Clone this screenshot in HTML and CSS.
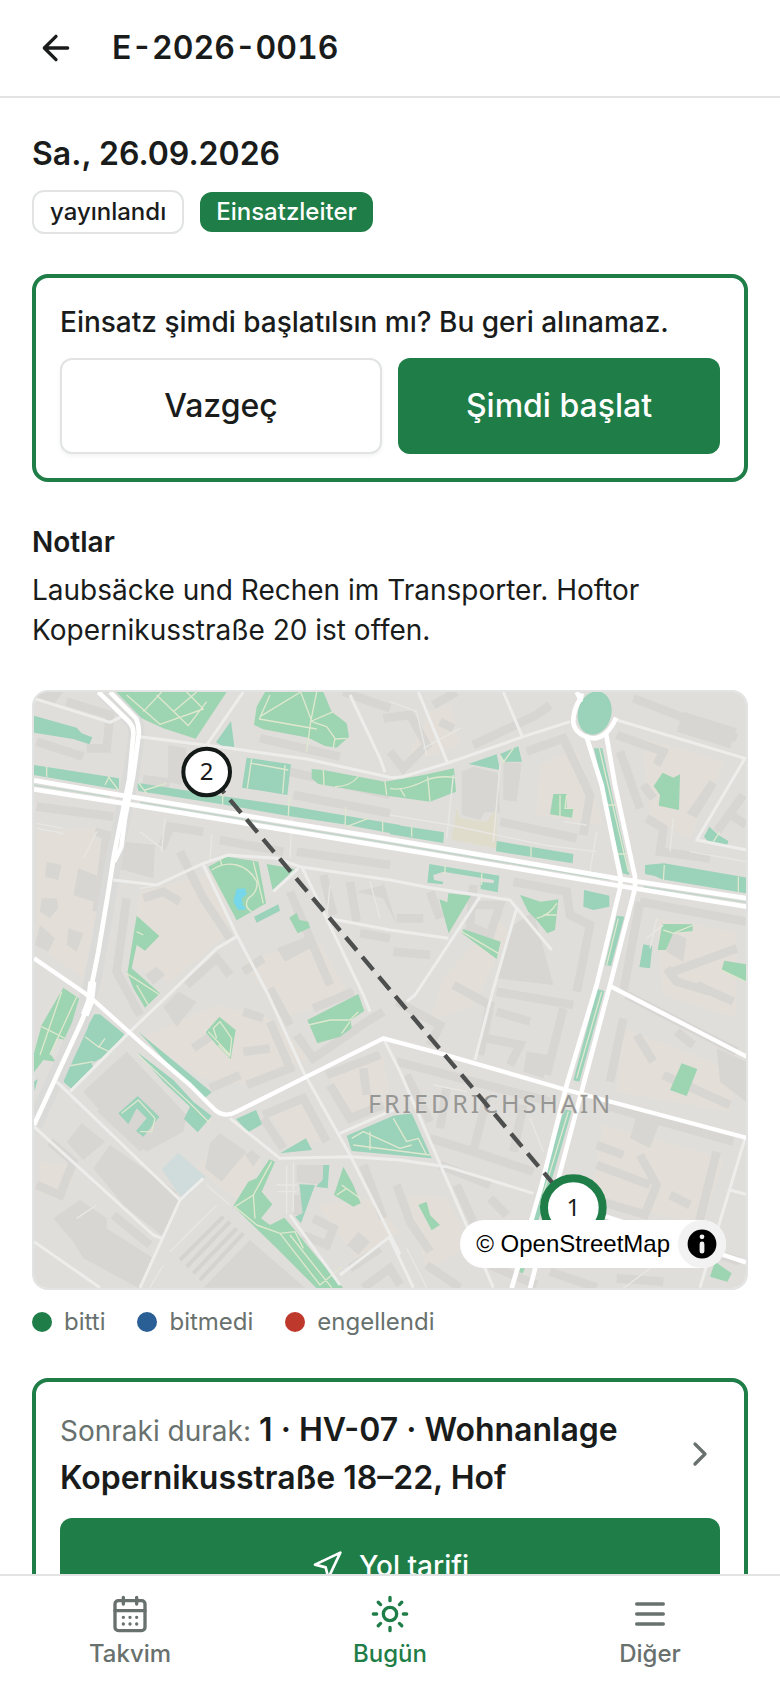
FILE: index.html
```html
<!DOCTYPE html>
<html lang="tr">
<head>
<meta charset="utf-8">
<meta name="viewport" content="width=device-width, initial-scale=1">
<title>E-2026-0016</title>
<link rel="stylesheet" href="styles.css">
</head>
<body>
<div class="app">
  <header class="topbar">
    <a class="back" href="#" aria-label="Geri">
      <svg class="icon" viewBox="0 0 24 24"><path d="m12 19-7-7 7-7M19 12H5"/></svg>
    </a>
    <h1 class="topbar-title">E-2026-0016</h1>
  </header>

  <main class="content">
    <section class="summary">
      <h2 class="date">Sa., 26.09.2026</h2>
      <div class="badges">
        <span class="badge badge-outline">yayınlandı</span>
        <span class="badge badge-solid">Einsatzleiter</span>
      </div>
    </section>

    <section class="card">
      <p class="question">Einsatz şimdi başlatılsın mı? Bu geri alınamaz.</p>
      <div class="actions">
        <button class="btn btn-outline" type="button">Vazgeç</button>
        <button class="btn btn-primary" type="button">Şimdi başlat</button>
      </div>
    </section>

    <section class="notes">
      <h3 class="notes-title">Notlar</h3>
      <p class="notes-text">Laubsäcke und Rechen im Transporter. Hoftor Kopernikusstraße 20 ist offen.</p>
    </section>

    <section class="map-block">
      <div class="map">
        <svg class="map-canvas" viewBox="12 21 2136 1788" preserveAspectRatio="xMidYMid slice" role="img" aria-label="Friedrichshain">
          <rect class="land" x="0" y="0" width="2160" height="1830"/>

          <!-- courtyards -->
          <g class="yard">
            <path d="M20 440 200 430 220 560 160 880 20 780Z"/>
            <path d="M330 620 560 560 600 740 420 890 300 840Z"/>
            <path d="M640 830 860 760 960 930 760 1000Z"/>
            <path d="M330 1060 560 960 720 1000 840 1120 660 1200 520 1180Z"/>
            <path d="M900 1180 1060 1110 1080 1270 960 1290Z"/>
            <path d="M710 1270 830 1230 900 1360 780 1390Z"/>
            <path d="M1240 880 1400 700 1440 740 1330 960 1200 1010Z"/>
            <path d="M1530 240 1640 190 1720 420 1520 390Z"/>
            <path d="M1840 160 2080 230 1980 460 1860 400Z"/>
            <path d="M1880 700 2120 740 2120 1000 1900 930Z"/>
            <path d="M1780 1030 2120 1160 2100 1280 1760 1220Z"/>
            <path d="M1720 1320 2080 1420 2020 1620 1680 1540Z"/>
            <path d="M860 1560 1020 1540 1110 1640 980 1720Z"/>
            <path d="M1130 1530 1250 1540 1320 1680 1190 1760Z"/>
            <path d="M30 1430 110 1440 130 1500 30 1530Z"/>
            <path d="M560 1380 700 1430 620 1540 500 1450Z"/>
            <path d="M1200 80 1260 60 1290 180 1120 240Z"/>
          </g>

          <!-- solid buildings -->
          <g class="building">
            <path d="M160 1220 290 1100 470 1290 460 1340 350 1400 230 1300Z"/>
            <path d="M70 1600 150 1545 230 1600 230 1630 370 1720 325 1808 160 1720 130 1670Z"/>
            <path d="M520 1808 660 1665 825 1808Z"/>
            <path d="M190 1450 240 1380 440 1520 445 1560 400 1655 280 1560Z"/>
            <path d="M110 1370 155 1315 225 1370 160 1425Z"/>
            <path d="M540 1375 570 1345 650 1400 575 1490 525 1450Z"/>
            <path d="M1295 260 1330 245 1405 265 1410 385 1365 380 1350 405 1295 390Z"/>
            <path d="M740 790 830 755 850 785 765 830Z"/>
            <path d="M400 965 445 920 500 950 440 1025Z"/>
            <path d="M285 470 375 480 370 580 260 550Z"/>
            <path d="M340 270 420 280 415 330 335 320Z"/>
            <path d="M415 180 470 190 455 300 415 290Z"/>
            <path d="M50 530 95 540 85 585 45 575Z"/>
            <path d="M35 640 80 640 85 670 60 700 30 680Z"/>
            <path d="M115 730 160 745 140 800 110 780Z"/>
            <path d="M30 720 75 760 55 800 15 780Z"/>
            <path d="M345 870 380 845 405 870 370 900Z"/>
            <path d="M145 550 210 575 190 650 130 630Z"/>
            <path d="M800 1440 895 1440 875 1500 800 1490Z"/>
            <path d="M790 1530 820 1530 820 1590 790 1590Z"/>
            <path d="M950 1680 985 1640 1020 1670 985 1710Z"/>
            <path d="M645 1410 665 1395 690 1415 670 1445Z"/>
            <path d="M980 620 1060 600 1060 590 1100 720 1060 640Z"/>
            <path d="M1420 230 1475 235 1460 350 1420 345Z"/>
            <path d="M1970 385 2040 285 2060 300 2000 400Z"/>
            <path d="M1450 720 1510 680 1570 900 1400 880Z"/>
            <path d="M1960 80 2120 130 2100 190 1940 140Z"/>
            <path d="M1920 740 1970 760 1960 830 1910 800Z"/>
            <path d="M20 21 100 21 70 60 20 40Z"/>
            <path d="M2060 1090 2148 1130 2148 1250 2070 1190Z"/>
            <path d="M1490 1100 1560 1110 1540 1180 1480 1160Z"/>
            <path d="M1820 1290 1890 1310 1860 1390 1800 1360Z"/>
          </g>

          <!-- perimeter blocks -->
          <g class="rows">
            <path d="M110 50 240 90 230 190 170 190M20 170 160 215"/>
            <path d="M20 365 250 395M195 440 230 450 200 680"/>
            <path d="M395 490 420 425 520 440M570 465 760 500"/>
            <path d="M450 500 520 640 600 760M340 640 400 620 450 650"/>
            <path d="M290 640 260 860 330 990M470 900 560 820 600 870"/>
            <path d="M690 160 930 215M780 260 1080 330M790 330 1080 385"/>
            <path d="M800 500 1080 540M880 570 910 690M960 590 980 710"/>
            <path d="M780 620 900 900M990 745 1080 760M640 860 700 820"/>
            <path d="M940 21 1080 70M1060 100 1140 90 1190 180 1120 250 1080 200"/>
            <path d="M1210 60 1280 21M1230 110 1270 130M1330 180 1520 90 1560 60"/>
            <path d="M1490 200 1600 160 1680 330 1660 450M1410 410 1640 460"/>
            <path d="M1810 40 2120 160M1760 150 1900 200 1880 240M1770 200 1830 370M1840 300 1870 340"/>
            <path d="M1850 400 1900 430 1890 500 2040 520M2060 440 2140 330M2090 380 2148 420"/>
            <path d="M1830 650 2148 710M1830 650 1780 920"/>
            <path d="M1450 590 1610 620 1620 690 1680 720 1640 920M1330 600 1320 720"/>
            <path d="M1320 660 1410 660 1380 750 1310 720M1200 620 1230 700M1100 700 1180 700M1090 800 1200 810"/>
            <path d="M1910 850 1940 890 2040 920M1930 860 2120 790M2000 900 2110 950"/>
            <path d="M1100 950 1230 1020 1200 1080M1270 900 1380 960 1350 1110"/>
            <path d="M1400 920 1630 960M1400 980 1500 1010M1370 1060 1470 1080 1440 1140M1600 970 1550 1170"/>
            <path d="M1790 930 2120 1100M1780 1000 1740 1190M1820 1050 1870 1130M1900 1170 2100 1260M1940 1040 1990 1080"/>
            <path d="M1100 1130 1560 1250M1130 1170 1200 1310M1250 1210 1230 1330M1370 1240 1330 1400M1480 1260 1450 1400"/>
            <path d="M1720 1260 2110 1370M1700 1380 1780 1410M1700 1440 1860 1500M1830 1410 1880 1500 1840 1600M2060 1400 2000 1640"/>
            <path d="M1200 1360 1330 1400 1510 1460M1230 1440 1380 1500M1280 1500 1370 1700M1380 1540 1430 1590"/>
            <path d="M1680 1540 1850 1590M1680 1590 1810 1660M1920 1660 2130 1730M1920 1530 1980 1560"/>
            <path d="M1100 1500 1140 1610 1200 1700M1190 1740 1290 1808M1380 1740 1520 1800M1560 1760 1700 1808M1760 1780 1900 1790"/>
            <path d="M540 1210 630 1170M650 1200 780 1150 720 1010M800 1050 850 1120 1010 1010 1060 980"/>
            <path d="M850 970 970 920M890 1170 1050 1110M900 1200 960 1300 1060 1260M1000 1150 1010 1230"/>
            <path d="M700 1290 820 1240 890 1370M700 1300 760 1390M640 980 700 1000M720 910 780 1020"/>
            <path d="M490 1090 560 1040M640 1100 720 1090"/>
            <path d="M20 1500 90 1530 130 1430 60 1370M210 1270 340 1390M250 1590 360 1680"/>
            <path d="M850 1600 910 1630 890 1680 820 1650M1000 1440 1060 1600M960 1750 1050 1690M1000 1808 1080 1750 1110 1800"/>
          </g>
          <g class="platform">
            <path d="M450 1725 580 1595M470 1745 600 1610M490 1765 620 1630M510 1785 640 1645"/>
          </g>
          <path class="sports" d="M1280 370 1290 400 1370 410 1400 370 1400 490 1265 465Z"/>
          <path class="pale-water" d="M395 1453 445 1403 527 1475 470 1535 450 1532Z"/>

          <!-- parks, north-west -->
          <g class="park">
            <path d="M240 21 590 21 497 161 400 130 325 95Z"/>
            <path d="M705 21H880L905 80 950 115 957 155 920 188 885 183 835 158 700 133 672 120 680 65Z"/>
            <path class="park-cool" d="M12 92 140 128 155 145 187 157 178 178 130 162 12 143Z"/>
            <path class="park-cool" d="M603 108 558 172 575 182 613 186Z"/>
            <path class="park-cool" d="M12 240 267 280 267 314 12 270Z"/>
            <path class="park-cool" d="M320 293 575 333 775 362 940 391 1110 420V450L940 418 775 393 575 358 325 318Z"/>
            <path class="park-cool" d="M650 218 783 238 772 330 636 308Z"/>
            <path d="M845 252 880 255 1065 290 1180 270 1272 250 1278 320 1200 350 1070 332 865 297 845 280Z"/>
            <path d="M535 545 590 515 685 530 708 655 620 706Z"/>
            <path d="M710 537 795 552 728 615Z"/>
            <path class="park-cool" d="M672 695 745 658 750 677 680 713Z"/>
            <path d="M778 698 800 683 808 705 835 710 840 728 803 745Z"/>
            <path d="M320 692 388 753 345 797 320 780 305 850 390 925 345 968 310 910 292 865Z"/>
          </g>
          <!-- parks, north-east -->
          <g class="park" transform="translate(1080 0)">
            <ellipse class="park-cool" cx="614" cy="84" rx="50" ry="66" transform="rotate(14 614 84)"/>
            <path class="park-cool" d="M235 237 320 208 330 255Z"/>
            <path class="park-cool" d="M330 207 385 184 396 230 345 230Z"/>
            <path class="park-cool" d="M0 417 162 442 160 474 0 448Z"/>
            <path class="park-cool" d="M320 468 550 507 548 535 318 499Z"/>
            <path d="M490 327 530 327 530 368 550 370 546 398 480 388Z"/>
            <path class="park-cool" d="M612 190 637 190 672 355 705 500 718 570 698 565 684 505 650 362Z"/>
            <path d="M818 263 850 278 870 268 867 375 806 362 810 330 791 303Z"/>
            <path class="park-cool" d="M958 425 985 450 1015 468 1012 480 955 470 942 455Z"/>
            <path class="park-cool" d="M765 540 822 535 1070 578V625L1040 620 815 583 795 573 765 567Z"/>
            <path class="park-cool" d="M118 537 328 572 323 622 272 612 272 590 310 595 312 585 160 560 130 570 132 585 160 590 158 598 112 593Z"/>
            <path d="M148 643 172 652 175 625 243 632 176 745Z"/>
            <path d="M390 630 452 650 505 643 495 735 472 745 435 700 415 680Z"/>
            <path class="park-cool" d="M582 615 658 632 658 665 610 675 580 665Z"/>
            <path d="M220 732 332 770 320 822 216 745Z"/>
            <path class="park-cool" d="M680 692 703 695 663 843 645 840Z"/>
            <path d="M817 717 908 718 908 738 850 743 828 795 803 795Z"/>
            <path class="park-cool" d="M760 778 787 783 780 850 748 846Z"/>
            <path d="M1003 827 1070 838V893L995 855Z"/>
          </g>
          <!-- parks, south-west -->
          <g class="park" transform="translate(0 900)">
            <path d="M100 8 158 48 110 165 80 160 60 205 77 230 40 225 12 262V205L35 120Z"/>
            <path class="park-cool" d="M193 88 210 88 283 148 245 203 185 235 190 248 125 312 100 290 150 165Z"/>
            <path class="park-cool" d="M12 290 23 282 14 318Z"/>
            <path class="park-cool" d="M325 140 545 322 525 338 440 265Z"/>
            <path class="park-cool" d="M322 202 430 285 490 350 545 393 503 442 462 402 480 365 400 290Z"/>
            <path d="M568 95 617 135 602 222 560 180 527 142Z"/>
            <path class="park-cool" d="M323 333 388 395 340 455 318 438 350 400 320 370 295 418 265 385Z"/>
            <path d="M832 105 985 27 1003 78 962 105 965 130 930 155 862 175Z"/>
            <path class="park-cool" d="M618 402 678 375 696 418 655 442Z"/>
            <path class="park-cool" d="M750 505 828 460 846 495Z"/>
            <path class="park-cool" d="M950 452 1090 392 1145 385 1205 520 965 498Z"/>
            <path d="M718 523 735 530 695 620 727 658 693 700 720 720 763 698 797 738 833 783 940 910H860L740 790 610 663 655 590 680 580Z"/>
            <path class="park-cool" d="M880 540H898L893 610 858 605 878 585Z"/>
            <path class="park-cool" d="M808 598 855 600 813 715 795 695 818 685Z"/>
            <path d="M940 545 970 600 992 655 970 665 912 630Z"/>
          </g>
          <!-- parks, south-east -->
          <g class="park" transform="translate(1080 900)">
            <path class="park-cool" d="M622 12 643 18 568 290 550 286Z"/>
            <path class="park-cool" d="M522 372 545 378 478 610 440 720 425 715Z"/>
            <path d="M875 235 922 252 890 333 840 315Z"/>
            <path d="M85 660 110 650 120 690 150 720 125 736Z"/>
            <path d="M975 830 1025 865 1012 890 960 875Z"/>
            <path d="M390 850H405L398 865 388 862Z"/>
          </g>
          <path class="pond" d="M620 612 645 610 650 628 636 640 638 660 650 672 625 676 610 650Z"/>

          <g class="footpath">
            <path d="M290 30 390 118 520 72 470 21M340 80 395 21M380 30 475 122 530 50M430 80 500 21"/>
            <path d="M720 30 688 102 860 132M690 95 812 21 845 108 910 80M860 21 842 110 830 200M845 110 890 125 915 160 910 188M915 162 950 160"/>
            <path d="M50 245V275M235 275 265 315M240 270 225 300M325 293 350 325M345 315 410 295M578 325V360M778 335 775 392M948 365 945 420M950 425 1015 400M1058 410V440"/>
            <path d="M665 220 652 310M665 235 775 255M765 240 758 325M880 255 882 300M1065 290 1070 330M985 275Q960 305 915 305"/>
            <path d="M545 555Q580 530 620 540T680 590Q685 620 655 640 640 665 665 680M570 520 575 540M320 740 340 750M290 865 390 930M320 900 355 960M670 530 700 655"/>
            <path d="M1080 310Q1120 320 1190 285 1230 270 1278 278M1193 275 1200 350M1110 310 1125 335M1145 425V455M1503 485V515M1245 540V570M1355 565V600M1410 210 1420 232 1450 190M1590 330V395M1610 330 1605 370 1630 370"/>
            <path d="M1708 190 1795 560M1725 360H1760M1760 507H1790M1903 540 1900 585M2125 575V620M1295 740 1405 805M1520 700Q1560 690 1580 655M1540 690 1580 690M2050 470 2070 440M1900 735 1930 745 1990 720M2075 855 2148 890M1765 700 1730 840"/>
            <path d="M35 1025 115 1065M95 920 30 1110M140 935 60 1110M165 1055 205 1085 250 1105M205 1088 225 1060M115 1143 190 1130M325 1110 480 1255 540 1315M535 1040 600 1110 605 1060 570 1010 550 1030 560 1060M600 1115 565 1080"/>
            <path d="M275 1285 325 1245 375 1300 365 1340 330 1340M835 1020 900 1005 960 1005 985 980M960 1010 935 1045M965 1360 1000 1340 1110 1390 1145 1380M970 1380 1200 1410M1090 1300 1130 1370 1165 1360 1190 1410M1020 1340V1395"/>
            <path d="M725 1430 670 1530 615 1565 680 1620 750 1645 870 1800 935 1745M670 1530 675 1600M750 1645 795 1640 820 1690M780 1650 905 1808M935 1500 990 1540M920 1530 950 1510M1715 920 1640 1180M1615 1280 1530 1560"/>
          </g>

          <g class="street-casing">
            <path d="M225 21 315 115 320 150 305 260 252 520 205 800 185 900 150 1020 12 1320"/>
          </g>
          <g class="alley">
            <path d="M330 610 390 600M405 400 395 500M545 450 540 530M330 440 395 490M200 440 160 520M20 415 100 430M20 430 100 445"/>
            <path d="M785 400 780 520M1080 390 1260 420 1540 480 1700 500M1270 270 1250 460M1410 240 1390 470M1600 410 1670 420"/>
            <path d="M1080 50 1160 80 1190 210M1180 190 1290 130M1930 400 1920 500M1980 500 2148 530M1680 560 1700 440M1850 760 1900 720"/>
            <path d="M740 1500 800 1500M770 1440V1590M790 1430V1580M740 1520H800M530 1500 600 1560M400 1740 360 1808M420 1700 560 1560M140 1600 200 1560"/>
            <path d="M1880 700 1860 790M900 600 890 700M1020 590 1050 700M1500 1300 1540 1400M1210 1200 1310 1220M1130 1690 1190 1808M1780 1810 1860 1750"/>
          </g>
          <g class="street">
            <path d="M12 40 240 112 275 95M330 155 600 190 830 222 1085 278 1120 275 1250 235 1480 155 1620 110"/>
            <path d="M1165 21 1252 232M1420 21 1478 158M1760 105 2145 220 2000 465 2150 495"/>
            <path d="M640 21 530 180M960 30 1050 220 1065 262"/>
            <path d="M250 585 380 600 520 535 595 510 740 520 810 545 1080 585 1200 608 1440 645 1565 795M805 550 730 620"/>
            <path d="M520 540 620 750 715 930 820 1160 960 1410 1110 1708"/>
            <path d="M815 545 1000 930 1020 980M620 755 560 790 420 925 300 1040 120 1220"/>
            <path d="M895 700 1080 735 1255 760M1350 635 1155 930 1130 950M1460 670 1385 930 1335 1125"/>
            <path d="M80 1190 450 1545 330 1808M12 1325 370 1650 395 1660M450 1545 520 1480"/>
            <path d="M600 1300 750 1420 960 1415 1110 1425 1250 1445 1510 1525M930 1345 1100 1270M1060 1060 1110 1160 1240 1460 1390 1808"/>
            <path d="M12 1670 210 1808M930 1770 1080 1655M2145 1360 2010 1808M2100 1515 2148 1528M780 1590 930 1800M1080 1660 1150 1808"/>
          </g>
          <g class="median"><path d="M12 300 240 336M330 352 1080 475 1740 585M1840 605 2150 652"/></g>
          <g class="avenue">
            <path d="M12 286 240 325 1080 463 1760 580 2150 640"/>
            <path d="M12 313 300 358 1080 487 1770 603 2150 665"/>
            <path d="M205 21 295 108Q312 125 310 150L298 280 252 510 235 620 205 800 185 900 180 950 150 1020 12 1320"/>
            <path d="M240 21 318 100Q328 120 326 150L310 270 285 400 274 485 252 530"/>
            <path d="M1640 21 1652 45 1655 25M1652 40Q1628 75 1630 115C1636 140 1660 160 1695 160 1728 155 1745 130 1758 98 1764 70 1758 45L1745 21"/>
            <path d="M1668 150 1715 300 1772 580 1770 610 1700 900 1610 1200 1535 1500 1445 1810"/>
            <path d="M1728 145 1755 300 1815 575 1815 610 1740 900 1660 1200 1580 1500 1500 1810"/>
          </g>
          <path class="avenue-bold" d="M187 890 180 950 164 990"/>
          <g class="road">
            <path d="M12 820 165 925 190 945 340 1080 480 1200 555 1275Q585 1300 620 1280L830 1175 1060 1060 1230 1105 1610 1215 2148 1358"/>
            <path d="M1740 903 2150 1115M1715 1590 2148 1732"/>
          </g>

          <text class="district" x="1014" y="1285">FRIEDRICHSHAIN</text>
          <path class="route" d="M530 261 1630 1568"/>
          <g class="stop">
            <circle class="stop-dot" cx="530" cy="261" r="70"/>
            <text class="stop-label" x="530" y="286">2</text>
          </g>
          <g class="stop">
            <circle class="stop-dot stop-dot-next" cx="1630" cy="1568" r="88"/>
            <text class="stop-label" x="1630" y="1593">1</text>
          </g>
        </svg>
        <div class="attribution">
          <a class="attribution-link" href="#">© OpenStreetMap</a>
          <button class="attribution-toggle" type="button" aria-label="Harita bilgisi">
            <svg class="info-icon" viewBox="0 0 20 20"><path fill-rule="evenodd" d="M4 10a6 6 0 1 0 12 0 6 6 0 1 0-12 0m5-3a1 1 0 1 0 2 0 1 1 0 1 0-2 0m0 3a1 1 0 1 1 2 0v3a1 1 0 1 1-2 0"/></svg>
          </button>
        </div>
      </div>
      <ul class="legend">
        <li class="legend-item"><span class="dot dot-done"></span>bitti</li>
        <li class="legend-item"><span class="dot dot-open"></span>bitmedi</li>
        <li class="legend-item"><span class="dot dot-blocked"></span>engellendi</li>
      </ul>
    </section>

    <section class="card">
      <a class="next-stop" href="#">
        <span class="next-stop-text"><span class="next-stop-label">Sonraki durak:</span> 1 · HV-07 · Wohnanlage Kopernikusstraße 18–22, Hof</span>
        <svg class="icon icon-muted" viewBox="0 0 24 24"><path d="m9 18 6-6-6-6"/></svg>
      </a>
      <a class="btn btn-primary btn-directions" href="#">
        <svg class="icon icon-small" viewBox="0 0 24 24"><path d="M3 11 22 2l-9 19-2-8-8-2z"/></svg>
        Yol tarifi
      </a>
    </section>
  </main>

  <nav class="tabs">
    <a class="tab" href="#">
      <svg class="icon" viewBox="0 0 24 24"><rect x="3" y="4" width="18" height="18" rx="2"/><path d="M8 2v4M16 2v4M3 10h18M8 14h.01M12 14h.01M16 14h.01M8 18h.01M12 18h.01M16 18h.01"/></svg>
      Takvim
    </a>
    <a class="tab tab-active" href="#" aria-current="page">
      <svg class="icon" viewBox="0 0 24 24"><circle cx="12" cy="12" r="4"/><path d="M12 2v2M12 20v2m-7.070-17.070 1.410 1.410M17.660 17.660l1.410 1.410M2 12h2M20 12h2M6.340 17.660l-1.410 1.410M19.070 4.930l-1.410 1.410"/></svg>
      Bugün
    </a>
    <a class="tab" href="#">
      <svg class="icon" viewBox="0 0 24 24"><path d="M4 6h16M4 12h16M4 18h16"/></svg>
      Diğer
    </a>
  </nav>
</div>
</body>
</html>
```
FILE: styles.css
```css
:root {
  --green: #1f7d47;
  --ink: #191c1b;
  --muted: #68716d;
  --line: #e1e4e3;
  --surface: #fff;
}

* {
  box-sizing: border-box;
}

body,
h1,
h2,
h3,
p,
ul {
  margin: 0;
  padding: 0;
}

body {
  background: var(--surface);
  color: var(--ink);
  font-family: Inter, "Noto Sans", sans-serif;
  font-size: 28px;
  line-height: 40px;
}

a {
  color: inherit;
  text-decoration: none;
}

button {
  font: inherit;
}

.app {
  display: flex;
  flex-direction: column;
  height: 100vh;
}

.icon {
  flex: none;
  width: 40px;
  height: 40px;
  fill: none;
  stroke: currentColor;
  stroke-width: 2;
  stroke-linecap: round;
  stroke-linejoin: round;
}

.icon-small {
  width: 32px;
  height: 32px;
}

.icon-muted {
  color: var(--muted);
}

.topbar {
  display: flex;
  flex: none;
  align-items: center;
  gap: 16px;
  padding: 8px 16px;
  border-bottom: 2px solid var(--line);
}

.back {
  display: grid;
  place-items: center;
  width: 80px;
  height: 80px;
}

.topbar-title {
  font-size: 32px;
  font-weight: 600;
  font-variant-numeric: tabular-nums;
}

.content {
  display: flex;
  flex: 1;
  flex-direction: column;
  gap: 40px;
  min-height: 0;
  padding: 32px;
  overflow-y: auto;
  scrollbar-width: none;
}

.content > * {
  flex: none;
}

.date {
  font-size: 32px;
  font-weight: 600;
  line-height: 48px;
}

.summary {
  display: grid;
  gap: 12px;
}

.badges {
  display: flex;
  align-items: center;
  gap: 16px;
}

.badge {
  padding: 4px 16px;
  border-radius: 12px;
  font-size: 24px;
  font-weight: 500;
  line-height: 32px;
}

.badge-outline {
  border: 2px solid var(--line);
}

.badge-solid {
  background: var(--green);
  color: #fff;
}

.card {
  display: grid;
  gap: 16px;
  padding: 24px;
  border: 4px solid var(--green);
  border-radius: 16px;
}

.question {
  font-weight: 500;
}

.actions {
  display: grid;
  grid-template-columns: 1fr 1fr;
  gap: 16px;
}

.btn {
  display: flex;
  align-items: center;
  justify-content: center;
  gap: 16px;
  min-height: 96px;
  padding: 0 24px;
  border: 0;
  border-radius: 12px;
  color: var(--ink);
  font-size: 32px;
  font-weight: 500;
}

.btn-outline {
  border: 2px solid var(--line);
  background: var(--surface);
  box-shadow: 0 2px 4px rgb(0 0 0 / 5%);
}

.btn-primary {
  background: var(--green);
  color: #fff;
}

.btn-directions {
  font-size: 28px;
}

.notes {
  display: grid;
  gap: 8px;
}

.notes-title {
  font-size: 28px;
  font-weight: 600;
}

.map-block {
  display: grid;
  gap: 16px;
}

.map {
  position: relative;
  height: 600px;
  overflow: hidden;
  border: 2px solid var(--line);
  border-radius: 16px;
}

.map-canvas {
  display: block;
  width: 100%;
  height: 100%;
  fill: none;
  stroke-linejoin: round;
}

.land {
  fill: #e0deda;
}

.yard {
  fill: #e3dfd8;
}

.building {
  fill: #d7d6d2;
}

.rows {
  stroke: #d8d6d3;
  stroke-width: 26;
  stroke-linejoin: miter;
}

.platform {
  stroke: #d3d3d0;
  stroke-width: 12;
}

.sports {
  fill: #e0dccb;
}

.pale-water {
  fill: #d0dcdc;
}

.park {
  fill: #9dd4b1;
}

.park-cool {
  fill: #9ad2ba;
}

.pond {
  fill: #76d7ea;
}

.footpath {
  stroke: #dfe8cf;
  stroke-width: 4;
}

.street-casing {
  stroke: #dadad8;
  stroke-width: 50;
}

.alley {
  stroke: #e8e7e4;
  stroke-width: 4;
}

.street {
  stroke: #ededec;
  stroke-width: 9;
}

.median {
  stroke: #c3d6cc;
  stroke-width: 5;
}

.avenue {
  stroke: #fff;
  stroke-width: 14;
}

.avenue-bold {
  stroke: #fff;
  stroke-width: 24;
}

.road {
  stroke: #fff;
  stroke-width: 13;
}

.district {
  fill: #969694;
  stroke: #e0deda;
  stroke-width: 4;
  paint-order: stroke;
  font-family: "Noto Sans", sans-serif;
  font-size: 75px;
  letter-spacing: 9px;
}

.route {
  stroke: #4d4f4e;
  stroke-width: 13;
  stroke-dasharray: 51 26;
  stroke-dashoffset: 45;
  stroke-linecap: butt;
}

.stop-dot {
  fill: #fff;
  stroke: #141a17;
  stroke-width: 12;
}

.stop-dot-next {
  stroke: var(--green);
  stroke-width: 24;
}

.stop-label {
  fill: var(--ink);
  font-family: "Noto Sans", sans-serif;
  font-size: 72px;
  text-anchor: middle;
}

.attribution {
  position: absolute;
  right: 20px;
  bottom: 20px;
  display: flex;
  align-items: center;
  gap: 8px;
  padding-left: 16px;
  border-radius: 24px;
  background: #fff;
  color: #000;
  font-family: "Liberation Sans", Arial, sans-serif;
  font-size: 24px;
}

.attribution-toggle {
  width: 48px;
  height: 48px;
  padding: 0;
  border: 0;
  border-radius: 24px;
  background: #f2f2f2;
}

.info-icon {
  display: block;
  width: 48px;
  height: 48px;
}

.legend {
  display: flex;
  gap: 32px;
  color: var(--muted);
  font-size: 24px;
  line-height: 32px;
  list-style: none;
}

.legend-item {
  display: flex;
  align-items: center;
  gap: 12px;
}

.dot {
  width: 20px;
  height: 20px;
  border-radius: 50%;
}

.dot-done {
  background: var(--green);
}

.dot-open {
  background: #2a5f95;
}

.dot-blocked {
  background: #be382c;
}

.next-stop {
  display: flex;
  align-items: center;
  gap: 16px;
}

.next-stop-text {
  flex: 1;
  font-size: 32px;
  font-weight: 600;
  line-height: 48px;
}

.next-stop-label {
  color: var(--muted);
  font-size: 28px;
  font-weight: 400;
  line-height: 40px;
}

.tabs {
  display: grid;
  flex: none;
  grid-template-columns: repeat(3, 1fr);
  border-top: 2px solid var(--line);
  background: var(--surface);
}

.tab {
  display: flex;
  flex-direction: column;
  align-items: center;
  gap: 4px;
  padding: 18px 0;
  color: var(--muted);
  font-size: 24px;
  font-weight: 500;
  line-height: 32px;
}

.tab-active {
  color: var(--green);
}
```
